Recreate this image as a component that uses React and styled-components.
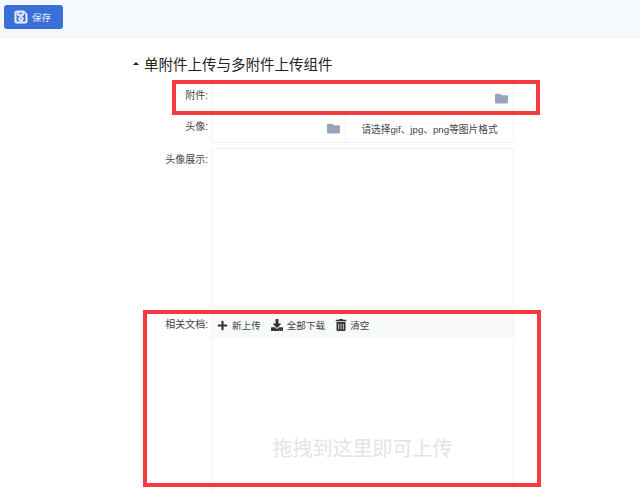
import styled, { createGlobalStyle } from "styled-components";
import { FaFolder, FaPlus, FaDownload, FaRegSave, FaTrashAlt } from "react-icons/fa";

const GlobalStyle = createGlobalStyle`
  html, body {
    margin: 0;
    height: 491px;
    overflow: hidden;
    background: #fff;
    font-family: "Liberation Sans", "Noto Sans CJK SC", sans-serif;
    color: #333;
  }
`;

export default function App() {
  return (
    <Page>
      <GlobalStyle />
      <Toolbar>
        <SaveButton>
          <FaRegSave size={14} stroke="currentColor" strokeWidth={24} />
          保存
        </SaveButton>
      </Toolbar>
      <Content>
        <SectionTitle>
          <Caret />
          单附件上传与多附件上传组件
        </SectionTitle>
        <Row $height={30}>
          <Label>附件:</Label>
          <Field>
            <FileInput>
              <FolderIcon />
            </FileInput>
          </Field>
        </Row>
        <Row $height={29} $gap={1}>
          <Label>头像:</Label>
          <Field>
            <FileInput $width={133}>
              <FolderIcon />
            </FileInput>
            <Hint>请选择gif、jpg、png等图片格式</Hint>
          </Field>
        </Row>
        <Row $height={160} $gap={5}>
          <Label $top={5}>头像展示:</Label>
          <Field />
        </Row>
        <Row $height={184} $gap={3}>
          <Label $top={7}>相关文档:</Label>
          <UploadField>
            <UploadBar>
              <BarAction>
                <FaPlus size={11} color="#333" />
                新上传
              </BarAction>
              <BarAction>
                <FaDownload size={12} color="#333" />
                全部下载
              </BarAction>
              <BarAction $gap={3}>
                <FaTrashAlt size={12} color="#333" />
                清空
              </BarAction>
            </UploadBar>
            <DropZone>拖拽到这里即可上传</DropZone>
          </UploadField>
        </Row>
      </Content>
      <Marker $left={172} $top={80} $width={368} $height={35} />
      <Marker $left={143} $top={310} $width={398} $height={177} />
    </Page>
  );
}

function FolderIcon() {
  return <FaFolder size={13} color="#9aa3ba" />;
}

const Page = styled.div`
  position: relative;
  width: 640px;
  height: 491px;
  overflow: hidden;
`;

const Toolbar = styled.header`
  display: flex;
  align-items: center;
  box-sizing: border-box;
  height: 38px;
  padding: 0 4px 4px;
  background: #f5f8fc;
  border-bottom: 1px solid #eef1f5;
`;

const SaveButton = styled.button`
  display: flex;
  align-items: center;
  gap: 4px;
  box-sizing: border-box;
  width: 59px;
  height: 24px;
  padding: 0 0 0 10px;
  border: 0;
  border-radius: 3px;
  background: #3a6fd8;
  color: #e8eefb;
  font: 9.5px "Liberation Sans", "Noto Sans CJK SC", sans-serif;
`;

const Content = styled.main`
  display: flex;
  flex-direction: column;
  width: 514px;
  padding-top: 14px;
`;

const SectionTitle = styled.h2`
  display: flex;
  align-items: center;
  gap: 5px;
  height: 22px;
  margin: 0 0 9px 133px;
  color: #222;
  font-size: 14.5px;
  font-weight: 400;
`;

const Caret = styled.span`
  width: 0;
  height: 0;
  border-left: 3px solid transparent;
  border-right: 3px solid transparent;
  border-bottom: 3px solid #222;
`;

const Row = styled.div`
  display: flex;
  height: ${(p) => p.$height}px;
  margin-top: ${(p) => p.$gap || 0}px;
`;

const Label = styled.label`
  box-sizing: border-box;
  width: 208px;
  margin-right: 3px;
  padding-top: ${(p) => p.$top ?? 6}px;
  text-align: right;
  color: #444;
  font-size: 10px;
  line-height: 13px;
`;

const Field = styled.div`
  display: flex;
  flex: 1;
  box-sizing: border-box;
  border: 1px solid #f1f2f5;
`;

const FileInput = styled.div`
  display: flex;
  align-items: center;
  justify-content: flex-end;
  box-sizing: border-box;
  width: ${(p) => (p.$width ? `${p.$width}px` : "100%")};
  padding-right: 5px;
`;

const Hint = styled.div`
  display: flex;
  flex: 1;
  align-items: center;
  justify-content: center;
  border-left: 1px solid #f1f2f5;
  color: #444;
  font-size: 9.7px;
`;

const UploadField = styled(Field)`
  flex-direction: column;
  border-bottom: 0;
`;

const UploadBar = styled.div`
  display: flex;
  align-items: center;
  gap: 10px;
  height: 26px;
  padding-left: 5px;
  background: #f8f9fb;
`;

const BarAction = styled.span`
  display: flex;
  align-items: center;
  gap: ${(p) => p.$gap ?? 4}px;
  color: #444;
  font-size: 9.6px;
`;

const DropZone = styled.div`
  display: flex;
  flex: 1;
  align-items: center;
  justify-content: center;
  padding-top: 61px;
  color: #e4e4e4;
  font-size: 20px;
`;

const Marker = styled.div`
  position: absolute;
  left: ${(p) => p.$left}px;
  top: ${(p) => p.$top}px;
  width: ${(p) => p.$width}px;
  height: ${(p) => p.$height}px;
  box-sizing: border-box;
  border: 4px solid #f43a40;
`;
